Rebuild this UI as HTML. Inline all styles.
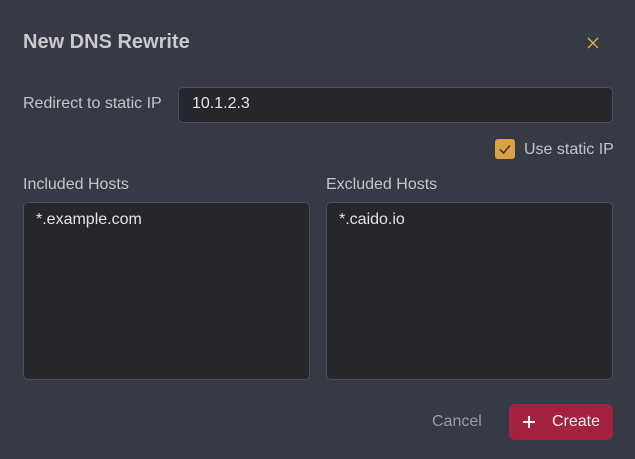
<!DOCTYPE html>
<html><head><style>
body{margin:0;width:635px;height:459px;background:#353a44;font-family:"Liberation Sans",sans-serif;color:#d4d4d8;position:relative;overflow:hidden}
.a{position:absolute}
.box{position:absolute;background:#26272c;border:1px solid #4b505b;border-radius:5px;box-sizing:border-box}
</style></head><body>
<div class="a" style="left:23px;top:31px;font-size:20px;font-weight:bold;color:#c9c9cc">New DNS Rewrite</div>
<svg class="a" style="left:586px;top:36px" width="14" height="14" viewBox="0 0 14 14"><path d="M2 2L12 12M12 2L2 12" stroke="#e0a448" stroke-width="1.5"/></svg>
<div class="a" style="left:23px;top:95px;font-size:16px;color:#c4c4c8">Redirect to static IP</div>
<div class="box" style="left:178px;top:87px;width:435px;height:36px"></div>
<div class="a" style="left:192px;top:95px;font-size:16px;color:#e4e4e7">10.1.2.3</div>
<div class="a" style="left:495px;top:139px;width:20px;height:20px;background:#dca145;border-radius:3px"></div>
<svg class="a" style="left:495px;top:139px" width="20" height="20"><path d="M5 10.5L8.5 14L15 6.5" stroke="#3a3020" stroke-width="1.5" fill="none"/></svg>
<div class="a" style="left:524px;top:141px;font-size:16px;color:#c4c4c8">Use static IP</div>
<div class="a" style="left:23px;top:176px;font-size:16px;color:#c4c4c8">Included Hosts</div>
<div class="a" style="left:326px;top:176px;font-size:16px;color:#c4c4c8">Excluded Hosts</div>
<div class="box" style="left:23px;top:202px;width:287px;height:178px"></div>
<div class="box" style="left:326px;top:202px;width:287px;height:178px"></div>
<div class="a" style="left:36px;top:211px;font-size:16px;color:#e4e4e7">*.example.com</div>
<div class="a" style="left:339px;top:211px;font-size:16px;color:#e4e4e7">*.caido.io</div>
<div class="a" style="left:432px;top:413px;font-size:16px;color:#9a9ca2">Cancel</div>
<div class="a" style="left:509px;top:404px;width:104px;height:36px;background:#a42240;border-radius:6px"></div>
<svg class="a" style="left:521px;top:414px" width="16" height="16"><path d="M8 2V14M2 8H14" stroke="#f2f2f2" stroke-width="2"/></svg>
<div class="a" style="left:552px;top:413px;font-size:16px;color:#f0f0f2">Create</div>
</body></html>
